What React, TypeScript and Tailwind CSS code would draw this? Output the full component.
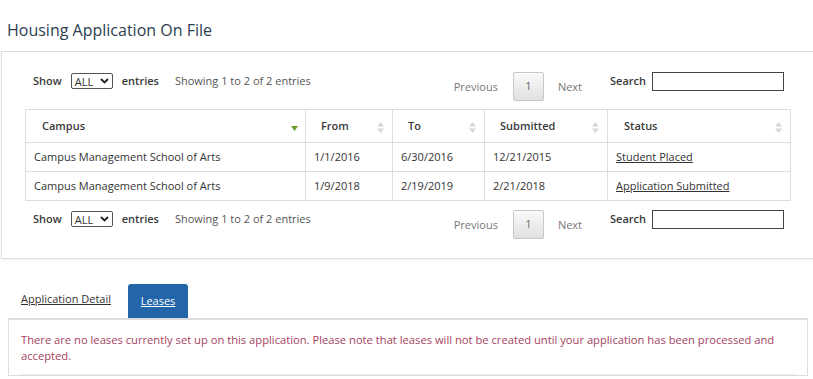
import React from 'react';

const rows = [
  { campus: 'Campus Management School of Arts', from: '1/1/2016', to: '6/30/2016', submitted: '12/21/2015', status: 'Student Placed' },
  { campus: 'Campus Management School of Arts', from: '1/9/2018', to: '2/19/2019', submitted: '2/21/2018', status: 'Application Submitted' },
];

function SortBoth() {
  return (
    <svg width="7" height="11" viewBox="0 0 7 11" className="absolute right-[8px] top-[12px]">
      <path d="M3.5 0 L7 4.5 L0 4.5 Z" fill="#d6d6d6" />
      <path d="M3.5 11 L7 6.5 L0 6.5 Z" fill="#d6d6d6" />
    </svg>
  );
}

function SortDesc() {
  return (
    <svg width="7" height="5" viewBox="0 0 7 5" className="absolute right-[7px] top-[16px]">
      <path d="M0 0 L7 0 L3.5 5 Z" fill="#6b9e2a" />
    </svg>
  );
}

function Controls() {
  return (
    <div className="flex items-start justify-between pl-[8px] pr-[7px] text-[#333]">
      <div className="flex items-center h-[16px] mt-[1px]">
        <span className="text-[11px] font-semibold text-[#3a3a3a]">Show</span>
        <div className="ml-[9px] w-[42px] h-[16px] border border-[#555] rounded-[2px] flex items-center px-[3px] text-[11px] leading-none">
          <span>ALL</span>
          <svg width="9" height="6" viewBox="0 0 9 6" className="ml-auto">
            <path d="M1 1 L4.5 4.5 L8 1" stroke="#222" strokeWidth="1.8" fill="none" />
          </svg>
        </div>
        <span className="ml-[9px] text-[11px] font-semibold text-[#3a3a3a]">entries</span>
        <span className="ml-[16px] text-[11px] text-[#555]">Showing 1 to 2 of 2 entries</span>
      </div>
      <div className="flex items-start">
        <span className="mt-[7px] text-[11px] text-[#777]">Previous</span>
        <div className="ml-[15px] w-[31px] h-[29px] border border-[#c8c8c8] rounded-[2px] bg-gradient-to-b from-[#fafafa] to-[#e0e0e0] flex items-center justify-center text-[11px] text-[#666]">1</div>
        <span className="ml-[14px] mt-[7px] text-[11px] text-[#777]">Next</span>
        <span className="ml-[28px] mt-[1px] text-[11px] font-semibold text-[#3a3a3a]">Search</span>
        <div className="ml-[6px] w-[132px] h-[19px] border border-[#444]" />
      </div>
    </div>
  );
}

export default function App() {
  return (
    <div className="min-h-screen bg-white overflow-hidden" style={{ fontFamily: '"Open Sans", "Liberation Sans", sans-serif' }}>
      <h1 className="pl-[7px] pt-[19px] text-[16px] leading-[22px] text-[#2c3e50]">Housing Application On File</h1>

      <div className="mt-[10px] ml-[1px] w-[830px] border border-[#ddd] shadow-[0_1px_2px_rgba(0,0,0,0.06)] pt-[20px] pb-[19px] pl-[23px]">
        <div className="w-[766px]">
          <Controls />
          <table className="mt-[8px] w-[766px] border-collapse text-[#333] table-fixed">
            <thead className="text-[#3a3a3a]">
              <tr className="h-[33px]">
                <th className="relative w-[280px] border border-[#ddd] pl-[16px] text-left text-[11px] font-semibold">Campus<SortDesc /></th>
                <th className="relative w-[87px] border border-[#ddd] pl-[15px] text-left text-[11px] font-semibold">From<SortBoth /></th>
                <th className="relative w-[92px] border border-[#ddd] pl-[15px] text-left text-[11px] font-semibold">To<SortBoth /></th>
                <th className="relative w-[123px] border border-[#ddd] pl-[15px] text-left text-[11px] font-semibold">Submitted<SortBoth /></th>
                <th className="relative border border-[#ddd] pl-[16px] text-left text-[11px] font-semibold">Status<SortBoth /></th>
              </tr>
            </thead>
            <tbody className="text-[11px]">
              {rows.map((r) => (
                <tr key={r.status} className="h-[29px]">
                  <td className="border border-[#ddd] pl-[8px]">{r.campus}</td>
                  <td className="border border-[#ddd] pl-[8px]">{r.from}</td>
                  <td className="border border-[#ddd] pl-[8px]">{r.to}</td>
                  <td className="border border-[#ddd] pl-[8px]">{r.submitted}</td>
                  <td className="border border-[#ddd] pl-[8px]">
                    <a href="#" className="underline text-[#333]">{r.status}</a>
                  </td>
                </tr>
              ))}
            </tbody>
          </table>
          <div className="mt-[9px]">
            <Controls />
          </div>
        </div>
      </div>

      <div className="mt-[25px] flex items-end pl-[21px]">
        <a href="#" className="mb-[11px] text-[11px] text-[#333] underline">Application Detail</a>
        <div className="ml-[17px] w-[60px] h-[34px] rounded-t-[3px] bg-[#2265a8] flex items-center justify-center">
          <a href="#" className="text-[11px] text-white underline">Leases</a>
        </div>
      </div>
      <div className="ml-[8px] w-[800px] border border-[#ddd] border-t-2 pt-[12px] px-[12px]">
        <p className="text-[11.2px] leading-[16px] text-[#a4435f]">
          There are no leases currently set up on this application. Please note that leases will not be created until your application has been processed and accepted.
        </p>
        <div className="mt-[10px] border-b border-[#eee]" />
      </div>
    </div>
  );
}
